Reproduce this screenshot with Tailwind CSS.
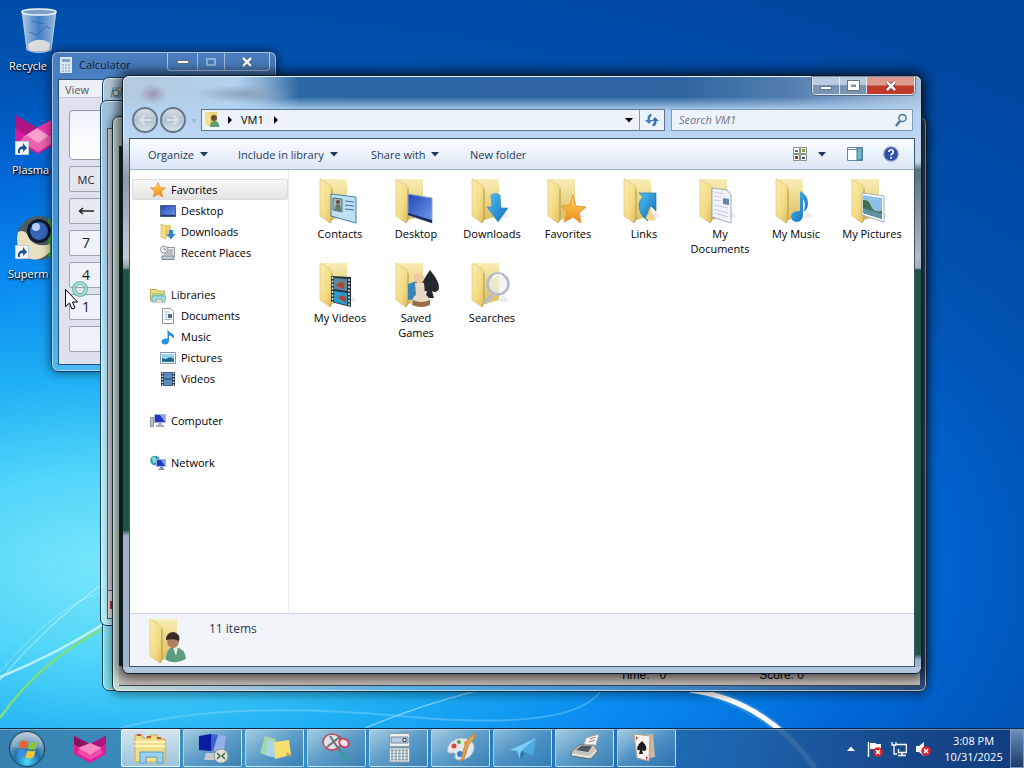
<!DOCTYPE html>
<html lang="en">
<head>
    <meta charset="UTF-8">
    <meta name="viewport" content="width=device-width, initial-scale=1.0">
    <title>VM1</title>
    <script src="https://cdn.jsdelivr.net/npm/@tailwindcss/browser@4"></script>
</head>
<body class="relative h-screen overflow-hidden flex flex-col text-[11px] leading-[15px] text-black font-['Open_Sans','Noto_Sans',sans-serif] bg-[radial-gradient(ellipse_1300px_650px_at_110px_565px,#78e6fb_0%,#52d6f9_14%,#1eb0f4_29%,#0a8cf0_44%,#0066d4_62%,#0054b4_74%,#0047a0_100%)]">

    <!-- Shared icon shapes -->
    <svg class="absolute w-0 h-0" aria-hidden="true">
        <defs>
            <linearGradient id="flap" x1="0" y1="0" x2="1" y2="1">
                <stop offset="0" stop-color="#f9eeb0"/><stop offset="0.6" stop-color="#f3db83"/><stop offset="1" stop-color="#e0b95a"/>
            </linearGradient>
            <linearGradient id="back" x1="0" y1="0" x2="0" y2="1">
                <stop offset="0" stop-color="#f8edb4"/><stop offset="1" stop-color="#dcbf62"/>
            </linearGradient>
            <linearGradient id="blue" x1="0" y1="0" x2="1" y2="1">
                <stop offset="0" stop-color="#4fc0f2"/><stop offset="1" stop-color="#0e6cb8"/>
            </linearGradient>
            <linearGradient id="screen" x1="0" y1="0" x2="1" y2="1">
                <stop offset="0" stop-color="#2347b4"/><stop offset="1" stop-color="#6f9cf0"/>
            </linearGradient>
            <linearGradient id="star" x1="0" y1="0" x2="0" y2="1">
                <stop offset="0" stop-color="#ffd75a"/><stop offset="1" stop-color="#f08a1c"/>
            </linearGradient>
            <radialGradient id="orb" cx="0.5" cy="0.85" r="0.8">
                <stop offset="0" stop-color="#4fe0ff"/><stop offset="0.45" stop-color="#1c6fae"/><stop offset="1" stop-color="#a9bccb"/>
            </radialGradient>
            <linearGradient id="glass" x1="0" y1="0" x2="1" y2="0">
                <stop offset="0" stop-color="#dfeaf3" stop-opacity="0.8"/><stop offset="0.5" stop-color="#5f93cf" stop-opacity="0.7"/><stop offset="1" stop-color="#c4d8ec" stop-opacity="0.8"/>
            </linearGradient>
        </defs>
        <symbol id="folder" viewBox="0 0 48 48">
            <path d="M31 40l10-1-6-6z" fill="#000" opacity="0.08"/>
            <path d="M6 1H31V38L16 42z" fill="url(#back)"/>
            <path d="M4 1l10 6q2 1 2 4v30l-2 4-10-7z" fill="url(#flap)" stroke="#dcc27a" stroke-width="0.7"/>
            <path d="M16 11v30l-2 4" fill="none" stroke="#b08f3c" stroke-width="0.8"/>
        </symbol>
        <symbol id="shortcut" viewBox="0 0 14 14">
            <path d="M0 0h14v14H0z" fill="#f4f6fa" stroke="#9aa8bc"/>
            <path d="M3 12q-1-6 5-7V2l4 5-4 4V8Q4 8 5 12z" fill="#1f4f9a"/>
        </symbol>
        <symbol id="star5" viewBox="0 0 16 16">
            <path d="M8 0.5l2.1 5 5.4.5-4.1 3.6 1.3 5.4L8 12.1 3.300 15l1.300-5.400L.5 6l5.400-.5z" fill="url(#star)" stroke="#e08a2a" stroke-width="0.7"/>
        </symbol>
        <symbol id="redx" viewBox="0 0 10 10">
            <circle cx="5" cy="5" r="4.800" fill="#d8252c"/><path d="M3 3l4 4M7 3l-4 4" stroke="#fff" stroke-width="1.500"/>
        </symbol>
    </svg>

    <!-- Wallpaper light streaks -->
    <svg class="absolute inset-0 w-full h-full" viewBox="0 0 1024 768" preserveAspectRatio="none" fill="none" aria-hidden="true">
        <path d="M0 718Q40 660 110 625" stroke="#7fe07a" stroke-width="2.500"/>
        <path d="M0 677Q55 655 110 620" stroke="#d8f8ff" stroke-width="2.500" opacity="0.8"/>
        <path d="M0 680Q45 625 110 578" stroke="#d8f8ff" stroke-width="1" opacity="0.8"/>
        <path d="M0 672Q60 600 110 590" stroke="#d8f8ff" stroke-width="1" opacity="0.4"/>
        <path d="M365 728Q420 705 480 690" stroke="#aee8ff" stroke-width="1.500" opacity="0.6"/>
        <path d="M120 728Q230 700 400 716T600 692" stroke="#8fdcff" stroke-width="2" opacity="0.4"/>
        <path d="M690 688Q770 705 815 768" stroke="#fff" stroke-width="9" opacity="0.15"/>
        <path d="M690 690Q765 700 815 768" stroke="#fff" stroke-width="5"/>
    </svg>

    <!-- Desktop -->
    <main class="relative flex-1">
        <ul class="w-[68px] pt-1.5 space-y-[29px] text-white [text-shadow:0_1px_2px_#000,1px_1px_2px_#000]">
            <li class="flex flex-col h-[75px]">
                <svg class="w-12 h-12 ml-3.5" viewBox="0 0 48 48">
                    <path d="M8 5L13 44q12 5 24 0L42 5z" fill="url(#glass)" stroke="#b9cde2" stroke-width="1"/>
                    <path d="M14 38q11-8 22-1l-1 7q-10 3-20 0z" fill="#e9e6dc" opacity="0.9"/>
                    <path d="M15 26l8 3 10-9 4 3M17 15l14 3" stroke="#2c5e9e" fill="none" opacity="0.7"/>
                    <ellipse cx="25" cy="6" rx="17" ry="3" fill="#7ca0c8" stroke="#eef4fa" stroke-width="1.500"/>
                </svg>
                <span class="pl-[9px] pt-1">Recycle</span>
            </li>
            <li class="flex flex-col h-[75px]">
                <svg class="w-12 h-12 ml-3.5" viewBox="0 0 48 48">
                    <path d="M1 5l22 13L46 5v26L24 44 1 31z" fill="#d8189a"/>
                    <path d="M1 5l22 13-11 7L1 18z" fill="#b01480"/><path d="M46 5L23 18l11 7 12-7z" fill="#f035a8"/>
                    <path d="M9 27l14-9 14 9-14 8z" fill="#f9a0cc"/><path d="M12 25l12 8 12-8 6 6-18 11-18-11z" fill="#ee62b0"/>
                    <use href="#shortcut" x="1" y="31" width="14" height="14"/>
                </svg>
                <span class="pl-3 pt-1">Plasma</span>
            </li>
            <li class="flex flex-col h-[75px]">
                <svg class="w-12 h-12 ml-3.5" viewBox="0 0 48 48">
                    <circle cx="25" cy="24" r="22" fill="#4c5c62"/><path d="M34 4q12 8 12 20T34 44z" fill="#3d9a4a"/>
                    <path d="M4 18q8-4 12 8 8 8 20 4v8q-12 12-24 5Q0 34 4 18z" fill="#e8e0c0"/>
                    <circle cx="25" cy="17" r="12" fill="#101c30"/><circle cx="25" cy="17" r="9" fill="#3565b8"/><circle cx="22" cy="13" r="4" fill="#b4cdf4"/>
                    <use href="#shortcut" x="1" y="31" width="14" height="14"/>
                </svg>
                <span class="pl-2 pt-1">Superm</span>
            </li>
        </ul>

        <!-- Calculator window -->
        <section class="absolute left-[51px] top-[51px] w-[226px] h-[321px] flex flex-col rounded-[7px] border border-[#123a70] ring-1 ring-inset ring-white/50 bg-linear-to-b from-[#4a7cbc] via-[#3f94dc] to-[#4cb8f0] px-1.5 pb-1.5 shadow-[0_0_8px_2px_rgba(0,0,0,0.4)]">
            <header class="flex h-[27px] pt-px">
                <svg class="w-3 h-4 mt-1 ml-0.5" viewBox="0 0 12 16">
                    <path d="M0 0h12v16H0z" fill="#dce8f4"/><path d="M2 2h8v3H2z" fill="#7ba4cc"/><path d="M2 8h8M2 11h8M2 14h8" stroke="#7f93a8" stroke-dasharray="2 1"/>
                </svg>
                <h2 class="flex-1 pl-[7px] pt-1 text-[#0d1d33]">Calculator</h2>
                <div class="flex h-[18px] rounded-b border border-t-0 border-white/60 divide-x divide-white/50">
                    <button class="w-[30px] flex justify-center items-center" aria-label="Minimize"><span class="w-3 h-1 bg-white border border-slate-500"></span></button>
                    <button class="w-[27px] flex justify-center items-center" aria-label="Maximize"><span class="w-2.5 h-2 border-2 border-[#8fb4dc]"></span></button>
                    <button class="w-[44px] flex justify-center items-center" aria-label="Close">
                        <svg class="w-3 h-2.5" viewBox="0 0 12 10"><path d="M2 1l8 8M10 1l-8 8" stroke="#3a4a66" stroke-width="4"/><path d="M2 1l8 8M10 1l-8 8" stroke="#fff" stroke-width="2.500"/></svg>
                    </button>
                </div>
            </header>
            <div class="flex-1 border border-[#28507c] bg-[#dde2ee]">
                <div class="h-[18px] px-1.5 pt-0.5 border-b border-[#c0c6d4] bg-[#eceff6] text-[#555]">View</div>
                <div class="pl-2.5 pt-3 flex flex-col gap-1.5 text-[#222]">
                    <output class="block w-[190px] h-[50px] rounded-sm border border-[#8e9bb0] bg-linear-to-b from-[#eef2fa] to-white"></output>
                    <button class="w-[34px] h-[26px] border border-[#9aa4b6] rounded-xs bg-[#e2e6ef]">MC</button>
                    <button class="w-[34px] h-[26px] border border-[#9aa4b6] rounded-xs bg-[#e6e9f2] flex items-center justify-center" aria-label="Backspace">
                        <svg class="w-4 h-2" viewBox="0 0 16 8"><path d="M16 4H2M5 1L1.500 4 5 7" fill="none" stroke="#222" stroke-width="1.500"/></svg>
                    </button>
                    <button class="w-[34px] h-[26px] border border-[#9aa4b6] rounded-xs bg-[#eff2f8] text-sm">7</button>
                    <button class="w-[34px] h-[26px] border border-[#9aa4b6] rounded-xs bg-[#eff2f8] text-sm">4</button>
                    <button class="w-[34px] h-[26px] border border-[#9aa4b6] rounded-xs bg-[#eff2f8] text-sm">1</button>
                    <button class="w-[34px] h-[26px] border border-[#9aa4b6] rounded-xs bg-[#eff2f8]" aria-label="0"></button>
                </div>
            </div>
        </section>

        <!-- Stacked background windows -->
        <section class="absolute left-[102px] right-[101px] top-[77px] bottom-[37px] rounded-[7px] border border-[#12405c] ring-1 ring-inset ring-white/60 bg-linear-to-b from-[#b4c6d8] via-[#8fd4ec] to-[#7fe4f2] p-[7px]">
            <svg class="w-3.5 h-3.5" viewBox="0 0 14 14"><path d="M3 3h9l-2 9H1z" fill="#e2cf9c" stroke="#4c80a0"/><circle cx="6" cy="8" r="3" fill="none" stroke="#3d7fa8" stroke-width="1.500"/></svg>
        </section>
        <section class="absolute left-[100px] right-[110px] top-[100px] bottom-[102px] rounded-[7px] border border-[#12405c] ring-1 ring-inset ring-white/70 bg-linear-to-b from-[#9fc0dc] via-[#b4e2f4] to-[#b9eef6] px-1.5 pt-[27px] pb-1.5 flex">
            <div class="flex-1 flex flex-col justify-end border border-[#48606c] bg-[#d6d4de]">
                <div class="h-7 border-t border-[#48606c] bg-[#e6e8e8] flex items-center"><span class="ml-0.5 w-2 h-2 bg-[#b03038]"></span></div>
            </div>
        </section>
        <section class="absolute left-[112px] right-[97px] top-[116px] bottom-[36px] flex flex-col rounded-[7px] border border-[#17303c] ring-1 ring-inset ring-white/60 bg-[linear-gradient(to_right,#c8d8d2_0%,#a9c8dc_15%,#58b4e8_35%,#3f86c8_70%,#2c4a78_99%)] px-1.5 pt-[29px] pb-[5px] shadow-[0_2px_8px_2px_rgba(0,0,0,0.35)]">
            <div class="flex-1 bg-[#0c3a24]"></div>
            <footer class="relative h-5 border-b border-[#3a4a58] bg-[#c6bdb8] text-black font-['Liberation_Sans',sans-serif] text-xs flex items-center pb-0.5 pl-[501px] gap-[93px]">
                <span class="flex gap-2.5"><span>Time:</span><span>0</span></span><span>Score: 0</span>
            </footer>
        </section>

        <!-- Explorer window -->
        <section class="absolute left-[122px] right-[102px] top-[75px] bottom-[54px] flex flex-col rounded-[7px] border border-[#0c1c2c] overflow-hidden bg-[#b4c8e0] shadow-[0_0_12px_4px_rgba(0,0,0,0.65)]">
            <header class="shrink-0 bg-[radial-gradient(ellipse_14px_10px_at_29px_17px,#9c96b8_0%,transparent_100%),radial-gradient(ellipse_50px_9px_at_120px_17px,#8ca0b8_0%,transparent_100%),linear-gradient(to_bottom,transparent_0px,transparent_20px,#b4d2f0_34px,#bcd6f2_61px),linear-gradient(to_right,#b4c9dc_0%,#b0d2ee_14%,#8fb4d8_17%,#2c68a4_22%,#2f66a0_70%,#5580b0_84%,#a8c0dc_100%)] border-t border-l border-white/70 rounded-t-[6px]">
                <div class="flex justify-end pr-1.5 h-[30px]">
                    <div class="flex h-[18px] rounded-b border border-t-0 border-white/80 outline outline-[#30486a]/60 divide-x divide-white/70 overflow-hidden">
                        <button class="w-[27px] flex justify-center items-center bg-linear-to-b from-[#b9cbe0] from-50% to-[#7b93b2] to-50%" aria-label="Minimize"><span class="w-3 h-1 bg-white border border-slate-500 mt-1"></span></button>
                        <button class="w-[27px] flex justify-center items-center bg-linear-to-b from-[#b9cbe0] from-50% to-[#7b93b2] to-50%" aria-label="Maximize"><span class="w-[11px] h-[9px] border-[3px] border-white outline outline-slate-500"></span></button>
                        <button class="w-[47px] flex justify-center items-center bg-linear-to-b from-[#dd9a8c] from-45% to-[#c03a28] to-55%" aria-label="Close">
                            <svg class="w-3 h-2.5" viewBox="0 0 12 10"><path d="M2 1l8 8M10 1l-8 8" stroke="#5c2a2a" stroke-width="4"/><path d="M2 1l8 8M10 1l-8 8" stroke="#fff" stroke-width="2.500"/></svg>
                        </button>
                    </div>
                </div>
                <div class="flex items-center h-[31px] pl-2 pr-2 pb-1.5">
                    <div class="flex gap-0.5 w-[69px]">
                        <button class="w-[26px] h-[26px] rounded-full border-2 border-[#66788c] bg-linear-to-b from-[#d5dee8] via-[#b4c2d0] to-[#d3e0ee] flex items-center justify-center" aria-label="Back">
                            <svg class="w-4 h-4" viewBox="0 0 16 16"><path d="M14 8H3M8 3L3 8l5 5" fill="none" stroke="#d8e2ec" stroke-width="2"/></svg>
                        </button>
                        <button class="w-[26px] h-[26px] rounded-full border-2 border-[#66788c] bg-linear-to-b from-[#d5dee8] via-[#b4c2d0] to-[#d3e0ee] flex items-center justify-center" aria-label="Forward">
                            <svg class="w-4 h-4" viewBox="0 0 16 16"><path d="M2 8h11M8 3l5 5-5 5" fill="none" stroke="#d8e2ec" stroke-width="2"/></svg>
                        </button>
                        <svg class="w-2 h-2 mt-2.5 ml-0.5" viewBox="0 0 8 8"><path d="M1 2h6L4 6z" fill="#a2bcd6"/></svg>
                    </div>
                    <div class="flex-1 flex h-[22px] border border-[#5a7896] bg-[#ecf3fb]">
                        <div class="flex-1 flex items-center px-0.5">
                            <svg class="w-4 h-4" viewBox="0 0 16 16"><path d="M2 0h11v14H5z" fill="#e6cf78"/><path d="M1 0l5 2v13l-5-3z" fill="#f4e08c"/><circle cx="10" cy="6" r="3" fill="#6a4a38"/><path d="M6 15q0-6 4.500-6t5 6z" fill="#5f9c78"/></svg>
                            <svg class="w-1.5 h-2 ml-[7px]" viewBox="0 0 6 8"><path d="M1 0v8l4-4z" fill="#000"/></svg>
                            <span class="ml-2">VM1</span>
                            <svg class="w-1.5 h-2 ml-[9px]" viewBox="0 0 6 8"><path d="M1 0v8l4-4z" fill="#000"/></svg>
                            <svg class="w-2 h-2 ml-auto mr-1" viewBox="0 0 8 8"><path d="M0 2h8L4 6.500z" fill="#000"/></svg>
                        </div>
                        <button class="w-[25px] border-l border-[#7f9ab4] flex items-center justify-center" aria-label="Refresh">
                            <svg class="w-4 h-4" viewBox="0 0 16 16"><path d="M3.500 8V6q0-3.500 4-4.500v2.500Q6 4.500 6 6.500V8h2.500L5 12 1 8z" fill="#3f80bc"/><path d="M12.500 9v1.500q0 3.500-4 4V12q1.500-.5 1.500-2.500V9H7.500L11 5l4 4z" fill="#3873b0"/></svg>
                        </button>
                    </div>
                    <label class="ml-1.5 w-[242px] h-[22px] flex items-center border border-[#7f9ab4] bg-[#ecf3fb] pl-[7px] pr-1">
                        <input type="text" placeholder="Search VM1" aria-label="Search VM1" class="flex-1 min-w-0 italic outline-none placeholder:text-[#6f7782]">
                        <svg class="w-3.5 h-3.5" viewBox="0 0 14 14"><circle cx="8.500" cy="5" r="3.600" fill="#e6f0fc" stroke="#4c74a8" stroke-width="1.500"/><path d="M6 8l-4 5" stroke="#4c6ea0" stroke-width="2.200"/></svg>
                    </label>
                </div>
            </header>

            <div class="flex-1 flex min-h-0">
                <div class="w-1.5 bg-[linear-gradient(to_bottom,#c4d8ee_0px,#8d9aa8_40px,#c6ccd6_120px,#8c98a4_130px,#1e5443_132px,#1e5443_392px,#a2b2cc_398px)]"></div>
                <div class="flex-1 flex flex-col min-w-0 border border-[#3a5474] bg-white">
                    <!-- Command bar -->
                    <nav class="flex items-center h-[31px] pl-[18px] pr-[15px] border-b border-[#a0afc3] bg-linear-to-b from-[#fbfdff] via-[#eaf2fb] to-[#dce7f5] text-[#1e395b]">
                        <button class="flex items-center w-[90px] gap-1.5">Organize <svg class="w-2 h-2" viewBox="0 0 8 8"><path d="M0 2h8L4 6.500z" fill="#1e395b"/></svg></button>
                        <button class="flex items-center w-[133px] gap-1.5 whitespace-nowrap">Include in library <svg class="w-2 h-2" viewBox="0 0 8 8"><path d="M0 2h8L4 6.500z" fill="#1e395b"/></svg></button>
                        <button class="flex items-center w-[99px] gap-1.5">Share with <svg class="w-2 h-2" viewBox="0 0 8 8"><path d="M0 2h8L4 6.500z" fill="#1e395b"/></svg></button>
                        <button>New folder</button>
                        <button class="ml-auto flex items-center gap-2.5" aria-label="Change your view">
                            <svg class="w-4 h-4" viewBox="0 0 16 16"><path d="M1.500 1.500h6v6h-6zM8.500 1.500h6v6h-6zM1.500 8.500h6v6h-6zM8.500 8.500h6v6h-6z" fill="#fff" stroke="#8a9080"/><path d="M3 4h3v2H3z" fill="#4b6ea8"/><path d="M10 3h3v3h-3z" fill="#78a83c"/><path d="M3 10h3v3H3z" fill="#a03828"/><path d="M10 11h3v2h-3z" fill="#39506c"/></svg>
                            <svg class="w-2 h-2" viewBox="0 0 8 8"><path d="M0 2h8L4 6.500z" fill="#1e395b"/></svg>
                        </button>
                        <button class="ml-[21px]" aria-label="Preview pane">
                            <svg class="w-4 h-4" viewBox="0 0 16 16"><path d="M.5 1.500h15v13H.5z" fill="#fff" stroke="#6c88a4"/><path d="M1 3.500h9" stroke="#6c88a4"/><path d="M10 2h5v12h-5z" fill="#6cb8cc" stroke="#3c7890"/></svg>
                        </button>
                        <button class="ml-5" aria-label="Help">
                            <svg class="w-4 h-4" viewBox="0 0 16 16"><circle cx="8" cy="8" r="7.200" fill="#2f4fa4" stroke="#8a9cc0" stroke-width="1.200"/><path d="M5.800 6q.2-2.200 2.300-2.200T10.300 6q0 1.200-1.200 1.800T8 9.500" fill="none" stroke="#fff" stroke-width="1.600"/><path d="M7.200 11h1.700v1.700H7.200z" fill="#fff"/></svg>
                        </button>
                    </nav>

                    <div class="flex-1 flex min-h-0">
                        <!-- Navigation pane -->
                        <aside class="w-[159px] shrink-0 border-r border-[#e4ebf4] pt-[9px] pl-0.5 space-y-[21px]">
                            <ul>
                                <li class="h-[21px] flex items-center gap-[5px] pl-[17px] border border-[#dcdcdc] rounded-xs bg-linear-to-b from-[#f8f8f8] to-[#e4e4e4]">
                                    <svg class="w-4 h-4"><use href="#star5"/></svg>Favorites
                                </li>
                                <li class="h-[21px] flex items-center gap-[5px] pl-7">
                                    <svg class="w-4 h-4" viewBox="0 0 16 16"><path d="M.5 2.500h15v11H.5z" fill="url(#screen)" stroke="#4a5f88"/><path d="M1 12.500h14" stroke="#223a6c" stroke-width="1.500"/></svg>Desktop
                                </li>
                                <li class="h-[21px] flex items-center gap-[5px] pl-7">
                                    <svg class="w-4 h-4" viewBox="0 0 16 16"><path d="M3 1h8v12H6z" fill="#e8cf78"/><path d="M1 0l5 2v13l-5-2z" fill="#f2dd8c" stroke="#cfa848" stroke-width="0.600"/><path d="M9 6h4v4h2.500L11 15.500 6.500 10H9z" fill="#2d8ad0"/></svg>Downloads
                                </li>
                                <li class="h-[21px] flex items-center gap-[5px] pl-7">
                                    <svg class="w-4 h-4" viewBox="0 0 16 16"><path d="M5 2.500h9.500v9H5z" fill="#eef1f4" stroke="#8d969e"/><circle cx="4" cy="4.500" r="3.500" fill="#f2f4f6" stroke="#8d969e"/><path d="M4 2.500v2h2M8 5h5M7 7h6M6 9h7" stroke="#7b858e" fill="none"/><path d="M2 11h12v3.500H2z" fill="#c6cdd2" stroke="#7b858e"/></svg>Recent Places
                                </li>
                            </ul>
                            <ul>
                                <li class="h-[21px] flex items-center gap-[5px] pl-[18px]">
                                    <svg class="w-4 h-4" viewBox="0 0 16 16"><path d="M.5 2.500h6l1 1.500h7v10H.5z" fill="#f0dc84" stroke="#b8a850"/><path d="M2 6h13v4H2z" fill="#a8d08a"/><path d="M2 9h14l-1 6H2z" fill="#a9dcea" stroke="#58a0b0" stroke-width="0.700"/><path d="M6 15v-3h6v3" fill="#f4e6a0" stroke="#58a0b0" stroke-width="0.700"/></svg>Libraries
                                </li>
                                <li class="h-[21px] flex items-center gap-[5px] pl-7">
                                    <svg class="w-4 h-4" viewBox="0 0 16 16"><path d="M2.500.5h8l3 3v12h-11z" fill="#fff" stroke="#8694a4"/><path d="M4.500 4h5M4.500 6.500h3M4.500 9h3M4.500 11.500h7" stroke="#9fb0c8"/><path d="M8 6h4v4H8z" fill="#4c6890"/></svg>Documents
                                </li>
                                <li class="h-[21px] flex items-center gap-[5px] pl-7">
                                    <svg class="w-4 h-4" viewBox="0 0 16 16"><path d="M7.500 0q1 3 4.500 4.500T13 10q0-3-4-3.500V12q-.5 3.500-4 3.500-3.500-.5-3.500-3T5.500 9.500h2z" fill="#2e8fdc"/></svg>Music
                                </li>
                                <li class="h-[21px] flex items-center gap-[5px] pl-7">
                                    <svg class="w-4 h-4" viewBox="0 0 16 16"><path d="M.5 2.500h15v11H.5z" fill="#fff" stroke="#8494a8"/><path d="M2 4h12v8H2z" fill="#8fd4ec"/><path d="M2 8q4 2 6 0t6 1v3H2z" fill="#1d6c8c"/></svg>Pictures
                                </li>
                                <li class="h-[21px] flex items-center gap-[5px] pl-7">
                                    <svg class="w-4 h-4" viewBox="0 0 16 16"><path d="M1 1h14v14H1z" fill="#2b3c50"/><path d="M4 1.500h8v6H4zM4 8.500h8v6H4z" fill="#5a8cc4"/><path d="M2.500 1.500v14M13.500 1.500v14" stroke="#dfe7ee" stroke-width="1.500" stroke-dasharray="1.500 1.500"/></svg>Videos
                                </li>
                            </ul>
                            <ul>
                                <li class="h-[21px] flex items-center gap-[5px] pl-[18px]">
                                    <svg class="w-4 h-4" viewBox="0 0 16 16"><path d="M.5 4.500h3v9h-3z" fill="#b9c4cc" stroke="#8494a0"/><path d="M4.500 1.500h11v8h-11z" fill="#2436c0" stroke="#a8b4cc"/><path d="M10 2h5v7z" fill="#8fa4f0"/><path d="M8 10h4v2h2v2H6v-2h2z" fill="#a4b0bc"/></svg>Computer
                                </li>
                            </ul>
                            <ul>
                                <li class="h-[21px] flex items-center gap-[5px] pl-[18px]">
                                    <svg class="w-4 h-4" viewBox="0 0 16 16"><circle cx="5" cy="5.500" r="4.800" fill="#2f9cc8"/><path d="M2 3q3-3 4 1T3 8z" fill="#8ce0b0"/><path d="M6.500 4.500h9v7h-9z" fill="#1c3cc4" stroke="#9fb0d8"/><path d="M11 5h4v6z" fill="#7fa0f0"/><path d="M10 12h3v1.500h1.500V15h-6v-1.500H10z" fill="#7f90a4"/></svg>Network
                                </li>
                            </ul>
                        </aside>

                        <!-- Files -->
                        <ul class="flex-1 flex flex-wrap content-start pl-[13px] pt-2 text-center">
                            <li class="w-[76px] h-[84px] flex flex-col items-center">
                                <svg class="w-12 h-12" viewBox="0 0 48 48"><use href="#folder"/><path d="M15 16l25 3v26l-25-7z" fill="#bfe0f4" stroke="#3f7fa8"/><path d="M17 20l9 1v13l-9-2z" fill="#a8b8ac" stroke="#50707c"/><path d="M19 32q0-6 3-6t3 7z" fill="#5c7c64"/><circle cx="22" cy="24" r="2" fill="#5c4a3c"/><path d="M29 23l9 1M29 27l9 1M29 31l9 1" stroke="#3c6ea4"/></svg>
                                Contacts
                            </li>
                            <li class="w-[76px] h-[84px] flex flex-col items-center">
                                <svg class="w-12 h-12" viewBox="0 0 48 48"><use href="#folder"/><path d="M16 16l24 4v25l-24-8z" fill="url(#screen)" stroke="#8fa4c4"/><path d="M16 35l24 7v3l-24-8z" fill="#1c2e54"/></svg>
                                Desktop
                            </li>
                            <li class="w-[76px] h-[84px] flex flex-col items-center">
                                <svg class="w-12 h-12" viewBox="0 0 48 48"><use href="#folder"/><path d="M23 17q5-3 9 0l1 13h7L30 44 19 29h5z" fill="url(#blue)" stroke="#3f90c8" stroke-width="0.700"/></svg>
                                Downloads
                            </li>
                            <li class="w-[76px] h-[84px] flex flex-col items-center">
                                <svg class="w-12 h-12" viewBox="0 0 48 48"><use href="#folder"/><path d="M29 17l3 11 10 1-7 6 2 10-8-6-9 5 3-9-6-7 9-1z" fill="url(#star)" stroke="#e8963a"/></svg>
                                Favorites
                            </li>
                            <li class="w-[76px] h-[84px] flex flex-col items-center">
                                <svg class="w-12 h-12" viewBox="0 0 48 48"><use href="#folder"/><path d="M19 15h17v18l-5-5q-5 4-3 15-9-6-9-16 0-4 4-8z" fill="url(#blue)" stroke="#2878b0" stroke-width="0.700"/><path d="M31 33l5 8-3 2-7-2q0-5 5-8z" fill="#f0d494"/></svg>
                                Links
                            </li>
                            <li class="w-[76px] h-[84px] flex flex-col items-center">
                                <svg class="w-12 h-12" viewBox="0 0 48 48"><use href="#folder"/><path d="M16 10l15 2 4 5v28l-19-6z" fill="#f2f4fb" stroke="#a0a8c0"/><path d="M18 14l10 2M18 18l7 1M18 22l7 1M18 27l14 3M18 31l14 4M18 35l14 4" stroke="#c4cade"/><path d="M27 20l6 1v6l-6-1z" fill="#5f88a8"/></svg>
                                <span>My<br>Documents</span>
                            </li>
                            <li class="w-[76px] h-[84px] flex flex-col items-center">
                                <svg class="w-12 h-12" viewBox="0 0 48 48"><use href="#folder"/><path d="M28 13q8 4 8 12 0 6-4 9 2-10-1-13v15q0 8-7 8-5-1-5-6 1-5 9-5z" fill="url(#blue)"/></svg>
                                My Music
                            </li>
                            <li class="w-[76px] h-[84px] flex flex-col items-center">
                                <svg class="w-12 h-12" viewBox="0 0 48 48"><use href="#folder"/><path d="M14 15l22 3v26l-22-7z" fill="#fff" stroke="#9fb0c0"/><path d="M15 17l19 3v21l-19-6z" fill="#8cc0e8"/><path d="M15 22q6-1 8 6t11 5v8l-19-6z" fill="#3f6e48"/><path d="M15 30l19 6v5l-19-6z" fill="#5f94a8"/></svg>
                                My Pictures
                            </li>
                            <li class="w-[76px] h-[84px] flex flex-col items-center">
                                <svg class="w-12 h-12" viewBox="0 0 48 48"><use href="#folder"/><path d="M15 14l20 1v30l-20-5z" fill="#26343c"/><path d="M18 16l13 1v12l-13-2z" fill="#5f88a0"/><path d="M18 29l13 2v12l-13-3z" fill="#2f9cd0"/><path d="M20 24q4-7 9-2l-2 5zM22 36q4-5 8-1v6z" fill="#a84a34"/><path d="M16.500 15v26M33 17v27" stroke="#e8eef0" stroke-width="1.500" stroke-dasharray="2 1.500"/></svg>
                                My Videos
                            </li>
                            <li class="w-[76px] h-[84px] flex flex-col items-center">
                                <svg class="w-12 h-12" viewBox="0 0 48 48"><use href="#folder"/><path d="M16 22l9-3v18l-9 1z" fill="#3a86b8"/><path d="M38 8q10 12 9 19-3 5-7 2l2 7H33l2-7q-7 2-6-5 2-6 9-16z" fill="#25282e"/><circle cx="27" cy="16" r="5" fill="#efc8a0"/><path d="M23 21h9l1 11q6 4 5 10-9 5-18 0 0-7 4-9z" fill="#e8d8c4"/><path d="M21 38q8 4 17 0v5q-9 4-18 0z" fill="#9c6c48"/></svg>
                                <span>Saved<br>Games</span>
                            </li>
                            <li class="w-[76px] h-[84px] flex flex-col items-center">
                                <svg class="w-12 h-12" viewBox="0 0 48 48"><use href="#folder"/><path d="M24 33l-7 8" stroke="#b8bcc8" stroke-width="4"/><circle cx="30" cy="22" r="10.500" fill="#eef0e8" fill-opacity="0.7" stroke="#b4b8cc" stroke-width="2.500"/><path d="M25 15q5-4 10 0" stroke="#fff" stroke-width="2" fill="none"/></svg>
                                Searches
                            </li>
                        </ul>
                    </div>

                    <!-- Details pane -->
                    <footer class="flex h-[53px] border-t border-[#ccd6e2] bg-[#f1f5fa]">
                        <svg class="w-12 h-12 ml-4 mt-1" viewBox="0 0 48 48"><use href="#folder"/><path d="M20 42q0-13 9-13 10 1 11 12-10 6-20 1z" fill="#5c9c80"/><path d="M27 29h5l-2 9z" fill="#e8f0ec"/><ellipse cx="27" cy="23" rx="6" ry="7" fill="#b08060"/><path d="M20 22q0-8 8-8 7 2 5 10-2-4-13-2z" fill="#3c2c24"/></svg>
                        <p class="ml-[15px] mt-[7px] text-xs text-[#2c3a50]">11 items</p>
                    </footer>
                </div>
                <div class="w-1.5 bg-[linear-gradient(to_bottom,#c4d8ee_0px,#c4d8ee_24px,#5c7078_32px,#b4bcc4_120px,#a4b0b8_130px,#1e5443_132px,#1e5443_516px,#a2b2cc_522px)]"></div>
            </div>
            <div class="h-1.5 shrink-0 bg-[#b4c6de]"></div>
        </section>

        <!-- Busy cursor -->
        <svg class="absolute left-16 top-[278px] w-7 h-8" viewBox="0 0 28 32" aria-hidden="true">
            <circle cx="16" cy="11" r="6" fill="none" stroke="#58b49c" stroke-width="4" opacity="0.85"/><circle cx="16" cy="11" r="6" fill="none" stroke="#b4e8dc" stroke-width="1.500"/>
            <path d="M1.500 11.500v17l4-3.500 2.500 6 3-1.200-2.500-5.800h5z" fill="#fff" stroke="#000"/>
        </svg>
    </main>

    <!-- Taskbar -->
    <footer class="relative flex h-10 border-t border-[#0c2a4c] text-white bg-[linear-gradient(to_right,#3a7ca8e6_0%,#4090c0e6_25%,#2a78b8e6_50%,#1f62a8e6_72%,#1a4684e6_88%,#123a78e6_100%)] shadow-[inset_0_1px_0_rgba(255,255,255,0.35)]">
        <button class="w-[58px] flex items-center pl-2" aria-label="Start">
            <svg class="w-[38px] h-[38px]" viewBox="0 0 38 38"><circle cx="19" cy="19" r="17.500" fill="url(#orb)" stroke="#16354f"/><path d="M4 17a15 15 0 0 1 30 0q-14 4-30 0z" fill="#fff" opacity="0.2"/><path d="M12 12q4-2.500 8-.5l-1.500 7q-4-1.500-8 .500z" fill="#e8642c"/><path d="M21.500 12q4 1.500 8 0l-2 7q-4 1.500-7.500 0z" fill="#8cc63c"/><path d="M10 20.500q4-2 8-.5l-2 7q-3-1.500-7.500.5z" fill="#3f8ee0"/><path d="M19.500 20.500q4 1.500 8 0l-2 7q-4 1.500-8 0z" fill="#fbc62c"/></svg>
        </button>
        <button class="w-[63px] flex items-center justify-center" aria-label="Plasma">
            <svg class="w-[34px] h-7" viewBox="0 0 34 28"><path d="M1 1l16 8L33 1v18l-16 9L1 19z" fill="#e01c98"/><path d="M1 1l16 8-8 5-8-5z" fill="#8c1060"/><path d="M33 1L17 9l8 5 8-5z" fill="#b01480"/><path d="M5 13l12-5 12 5-12 7z" fill="#f888c4"/><path d="M7 14l10 6 10-6 3 4-13 7-13-7z" fill="#f04cac"/></svg>
        </button>
        <div class="flex gap-[3px] pb-px">
            <button class="w-[59px] rounded-xs border border-white/90 bg-linear-to-b from-[#d4e4ee] to-[#9cc4dc] flex items-center justify-center" aria-label="Windows Explorer">
                <svg class="w-9 h-8" viewBox="0 0 36 32"><path d="M2 3h7v3h8V3h7v4h8v23H2z" fill="#f2dd88" stroke="#cfae50"/><path d="M4 3h4M14 5h4M24 6h4" stroke="#c85030" stroke-width="2"/><path d="M2 10h30M2 14h30" stroke="#fff4c0" stroke-width="2"/><path d="M7 20h23v11h-6v-6H13v6H7z" fill="#9cd0f0" stroke="#4c9cc8"/></svg>
            </button>
            <button class="w-[59px] rounded-xs border border-white/60 bg-linear-to-br from-[#a4cce0] via-[#5c9cc8] to-[#3a80b4] flex items-center justify-center" aria-label="Remote Desktop">
                <svg class="w-8 h-8" viewBox="0 0 32 32"><path d="M2 4l12-2v17l-12-1z" fill="#0c1ca0"/><path d="M14 2l15 2-2 14-13 1z" fill="#94b0e8"/><path d="M14 2l7 1-5 16h-2z" fill="#3c60cc"/><path d="M9 21h9v3l4 4H7z" fill="#c4c8cc"/><circle cx="24" cy="24" r="7" fill="#dfe2dc" stroke="#8c9490"/><path d="M20 21l3 3-3 3M28 21l-3 3 3 3" stroke="#3a6a3c" stroke-width="1.500" fill="none"/></svg>
            </button>
            <button class="w-[59px] rounded-xs border border-white/60 bg-linear-to-br from-[#a4cce0] via-[#5c9cc8] to-[#3a80b4] flex items-center justify-center" aria-label="Sticky Notes">
                <svg class="w-8 h-8" viewBox="0 0 32 32"><path d="M6 4l11 3-5 18-11-4z" fill="#a4d8a4"/><path d="M9 8l12 3-4 15-11-3z" fill="#a8d4ec"/><path d="M15 10l15-2 2 15-16 4z" fill="#f8e070"/><path d="M32 23l-5 1 1-4z" fill="#d0a838"/></svg>
            </button>
            <button class="w-[59px] rounded-xs border border-white/60 bg-linear-to-br from-[#a4cce0] via-[#5c9cc8] to-[#3a80b4] flex items-center justify-center" aria-label="Snipping Tool">
                <svg class="w-8 h-8" viewBox="0 0 32 32"><ellipse cx="11" cy="10" rx="9" ry="8" fill="#dfe4ea" stroke="#c44a50" stroke-width="1.500"/><path d="M6 15L20 4M9 4l12 18" stroke="#6c747c" stroke-width="2"/><ellipse cx="23" cy="11" rx="5" ry="4" fill="#f0e8ec" stroke="#d03c5c" stroke-width="2" transform="rotate(35 23 11)"/><path d="M19 20l9 8" stroke="#3c98a0" stroke-width="4"/></svg>
            </button>
            <button class="w-[59px] rounded-xs border border-white/60 bg-linear-to-br from-[#a4cce0] via-[#5c9cc8] to-[#3a80b4] flex items-center justify-center" aria-label="Calculator">
                <svg class="w-8 h-8" viewBox="0 0 32 32"><path d="M6.500 1.500h20v13h-20zM6.500 16h20v14h-20z" fill="#eef0ee" stroke="#8c9aa4"/><path d="M8 5h17v6H8z" fill="#b4cce0" stroke="#7c8c98"/><path d="M20 6.500h3v3h-3z" fill="#e4ecf4" stroke="#34485c"/><path d="M8 18.500h17M8 21.500h17M8 24.500h17M8 27.500h17" stroke="#7890a0" stroke-width="2" stroke-dasharray="2.500 1.100"/></svg>
            </button>
            <button class="w-[59px] rounded-xs border border-white/60 bg-linear-to-br from-[#a4cce0] via-[#5c9cc8] to-[#3a80b4] flex items-center justify-center" aria-label="Paint">
                <svg class="w-8 h-8" viewBox="0 0 32 32"><path d="M2 18Q4 7 17 6q13 1 12 11-2 10-14 11-6 0-5-4t-3-3-5-3z" fill="#e4e8ec" stroke="#a8b4c0"/><circle cx="9" cy="14" r="2.500" fill="#d84a3c"/><circle cx="14" cy="10" r="2" fill="#48a84c"/><circle cx="21" cy="11" r="2" fill="#e8a020"/><circle cx="15" cy="22" r="3" fill="#3c80d0"/><path d="M31 1q-2 8-7 11l-3 9q-1 6-5 9 1-9 4-17 3-8 11-12z" fill="#e0a450" stroke="#b47c34" stroke-width="0.700"/></svg>
            </button>
            <button class="w-[59px] rounded-xs border border-white/60 bg-linear-to-br from-[#8cbcd8] via-[#4c90c4] to-[#3080b8] flex items-center justify-center" aria-label="Mail">
                <svg class="w-8 h-8" viewBox="0 0 32 32"><path d="M3 18L29 6l-3 18-9-5z" fill="#4cacE4"/><path d="M29 6L14 19l-1 8-3-8-7-1z" fill="#7cccf4"/><path d="M14 19l-1 8 5-5z" fill="#1c78b4"/></svg>
            </button>
            <button class="w-[59px] rounded-xs border border-white/60 bg-linear-to-br from-[#a4cce0] via-[#5c9cc8] to-[#3a80b4] flex items-center justify-center" aria-label="Fax and Scan">
                <svg class="w-8 h-8" viewBox="0 0 32 32"><path d="M17 6l13-4-5 17-11-3z" fill="#f4f6f8" stroke="#a4acb4"/><path d="M21 7l6-2M20 10l6-2" stroke="#b4746c"/><path d="M3 19l7-6h15l4 6-7 8-20-3z" fill="#c8c4bc" stroke="#6c7074"/><path d="M7 18l5-4h11l-4 6z" fill="#50585e"/><path d="M3 22l17 3 7-6" stroke="#fff" fill="none"/></svg>
            </button>
            <button class="w-[59px] rounded-xs border border-white/60 bg-linear-to-br from-[#a4cce0] via-[#4c90c4] to-[#2c70b0] flex items-center justify-center" aria-label="Solitaire">
                <svg class="w-8 h-8" viewBox="0 0 32 32"><path d="M8 3l14-1 2 23-14 3z" fill="#d0b4a0"/><path d="M3 2l16 2-1 25L6 26z" fill="#f8f4f0" stroke="#b89c8c"/><path d="M11 9q6 6 4 9-2 2-4 0l1 4H8l1-4q-3 1-3-2 1-4 5-7z" fill="#1c1c20"/><path d="M5 4l2 2-2 2zM15 24l2 2-2 2z" fill="#c83434"/></svg>
            </button>
        </div>

        <!-- Notification area -->
        <div class="ml-auto flex items-center">
            <svg class="w-2 h-2 mr-3" viewBox="0 0 8 8"><path d="M0 6h8L4 1.500z" fill="#fff"/></svg>
            <svg class="w-4 h-4 mr-2" viewBox="0 0 16 16"><path d="M1.500 1v15" stroke="#fff" stroke-width="1.500"/><path d="M3 2h6v1h5v6H8V8H3z" fill="#fff"/><use href="#redx" x="6" y="6" width="10" height="10"/></svg>
            <svg class="w-4 h-4 mr-2" viewBox="0 0 16 16"><path d="M5.500 3.500h10v8h-8V8" fill="none" stroke="#fff" stroke-width="1.500"/><path d="M11 12v2M7 14.500h8" stroke="#fff" stroke-width="1.500"/><path d="M1 1v3h4V1M3 4v9h3" fill="none" stroke="#fff" stroke-width="1.300"/></svg>
            <svg class="w-4 h-4 mr-3" viewBox="0 0 16 16"><path d="M1 5h3l5-4v14l-5-4H1z" fill="#fff"/><use href="#redx" x="6" y="5" width="10" height="10"/></svg>
            <div class="w-[61px] text-center leading-4 whitespace-nowrap">3:08 PM<br>10/31/2025</div>
            <button class="ml-1.5 w-3.5 self-stretch border border-[#7a9cc4] bg-linear-to-b from-[#6c90b8] to-[#1c3c6c]" aria-label="Show desktop"></button>
        </div>
    </footer>
</body>
</html>
